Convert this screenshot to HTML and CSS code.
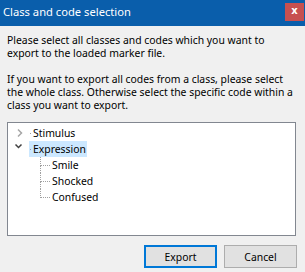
FILE: index.html
```html
<!DOCTYPE html>
<html>
<head>
<meta charset="utf-8" />
<title>Class and code selection</title>
<link rel="stylesheet" href="styles.css">
</head>
<body>
<div class="window">
    <!-- Barre de titre -->
    <div class="titlebar">
        <span class="title">Class and code selection</span>
        <span class="close">x</span>
    </div>

    <div class="content">
        <p class="intro">Please select all classes and codes which you want to<br>export to the loaded marker file.</p>
        <p class="intro">If you want to export all codes from a class, please select<br>the whole class. Otherwise select the specific code within a<br>class you want to export.</p>

        <div class="tree">
            <div class="node">
                <span class="toggle">
                    <svg width="16" height="16" viewBox="0 0 16 16"><polyline points="4,4.5 7.5,8 4,11.5" fill="none" stroke="#a6a6a6" stroke-width="1.5"/></svg>
                </span>
                <span class="label">Stimulus</span>
            </div>
            <div class="node">
                <span class="toggle">
                    <svg width="16" height="16" viewBox="0 0 16 16"><polyline points="1.5,3.5 4.5,6.5 7.5,3.5" fill="none" stroke="#404040" stroke-width="1.5"/></svg>
                </span>
                <span class="label selected">Expression</span>
            </div>
            <div class="children">
                <div class="child"><span class="label">Smile</span></div>
                <div class="child"><span class="label">Shocked</span></div>
                <div class="child"><span class="label">Confused</span></div>
            </div>
        </div>

        <div class="buttons">
            <button class="btn btn_default">Export</button>
            <button class="btn">Cancel</button>
        </div>
    </div>
</div>
</body>
</html>
```

FILE: styles.css
```css
body {
    margin: 0;
    padding: 0;
    font-family: "Noto Sans", "Open Sans", sans-serif;
    font-size: 10.4px;
    color: #000;
    background: #f0f0f0;
}

.window {
    width: 305px;
    height: 272px;
    overflow: hidden;
    display: flex;
    flex-direction: column;
}

.titlebar {
    height: 26px;
    background: #0a5eab;
    color: white;
    display: flex;
    align-items: flex-start;
    justify-content: space-between;
}

.title {
    font-size: 11.2px;
    line-height: 24px;
    padding-left: 3px;
}

.close {
    width: 19px;
    height: 18px;
    margin: 3px 1px 0 0;
    background: #c75050;
    color: white;
    font-family: "DejaVu Sans", sans-serif;
    font-weight: bold;
    font-size: 10px;
    line-height: 16px;
    text-align: center;
}

.content {
    padding: 8px 9px 0 7px;
    display: flex;
    flex-direction: column;
}

.intro {
    margin: 0 0 13px 0;
    line-height: 13px;
    white-space: nowrap;
}

.intro + .intro {
    margin-bottom: 10px;
}

.tree {
    background: white;
    border: 1px solid #828790;
    padding-top: 2px;
    box-sizing: border-box;
    height: 114px;
}

.node {
    display: flex;
    align-items: center;
    height: 16px;
    padding-left: 6px;
}

.toggle {
    width: 15px;
    height: 16px;
}

.toggle svg {
    display: block;
}

.label {
    line-height: 16px;
    white-space: nowrap;
}

.node .label {
    position: relative;
    padding: 0 1px 0 4px;
}

.node .label::before {
    content: "";
    position: absolute;
    left: 1px;
    top: 8px;
    width: 1px;
    height: 1px;
    background: #a0a0a0;
}

.node .selected {
    background: #cce8ff;
}

.children {
    margin-left: 32px;
}

.child {
    position: relative;
    height: 16px;
    padding-left: 12px;
}

.child::before {
    content: "";
    position: absolute;
    left: 0;
    top: 0;
    width: 9px;
    height: 8px;
    border-left: 1px dotted #a0a0a0;
    border-bottom: 1px dotted #a0a0a0;
}

.child::after {
    content: "";
    position: absolute;
    left: 0;
    top: 9px;
    height: 7px;
    border-left: 1px dotted #a0a0a0;
}

.child:last-child::after {
    display: none;
}

.buttons {
    display: flex;
    justify-content: flex-end;
    gap: 7px;
    margin: 9px -1px 0 0;
}

.btn {
    width: 73px;
    height: 23px;
    padding: 0;
    font-family: "Noto Sans", "Open Sans", sans-serif;
    font-size: 10.4px;
    color: #000;
    background: #e1e1e1;
    border: 1px solid #adadad;
    box-sizing: border-box;
}

.btn_default {
    border: 2px solid #0078d7;
}
```
